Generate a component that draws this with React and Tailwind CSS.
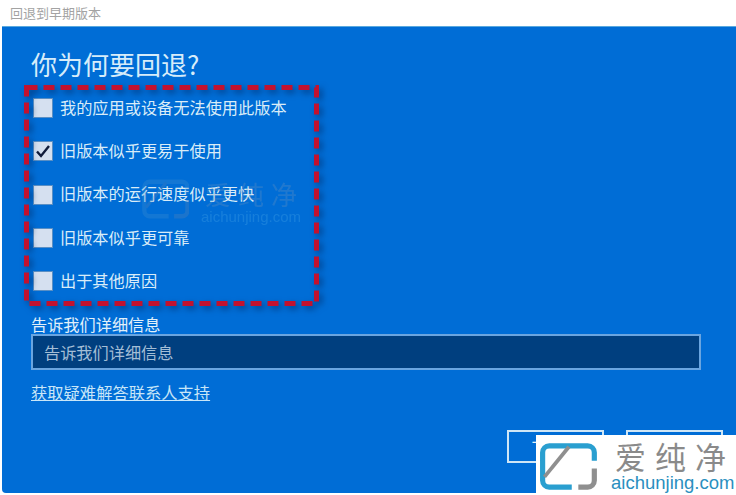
import React from 'react';

const font = { fontFamily: '"Noto Sans CJK SC", "Liberation Sans", sans-serif' };
const latin = { fontFamily: '"Liberation Sans", sans-serif' };

const options = [
  { label: '我的应用或设备无法使用此版本', checked: false },
  { label: '旧版本似乎更易于使用', checked: true },
  { label: '旧版本的运行速度似乎更快', checked: false },
  { label: '旧版本似乎更可靠', checked: false },
  { label: '出于其他原因', checked: false },
];

const LogoMark = ({ className, blue = '#2a9fd0', gray = '#8f8f8f' }) => (
  <svg className={className} viewBox="0 0 60 50" fill="none">
    <path d="M58 19V10a7 7 0 0 0-7-7H10a7 7 0 0 0-7 7v30a7 7 0 0 0 7 7h24" stroke={blue} strokeWidth="5.5" />
    <path d="M5 36L31 4" stroke={gray} strokeWidth="4" />
    <path d="M58 27v13a7 7 0 0 1-7 7H41" stroke={gray} strokeWidth="5.5" />
  </svg>
);

const App = () => {
  return (
    <div className="relative h-[495px] w-[736px] overflow-hidden bg-white" style={font}>
      <div className="flex h-[26px] items-center pl-[10px] text-[13px] text-[#a3a3a3]">回退到早期版本</div>
      <div className="ml-[2px] flex h-[467px] flex-col rounded-bl-[4px] border-t border-[#5aa9de] bg-[#006dd6] pl-[2px] pt-[20px]">
        <h1 className="ml-[27px] text-[26px] leading-[34px] text-[#d6ecfa]">你为何要回退?</h1>

        <div className="relative ml-[20px] mt-[4px] h-[221px] w-[295px] pl-[9px] pt-[13px]">
          {/* red annotation drawn round the options */}
          <svg className="absolute left-0 top-0 h-[221px] w-[295px] drop-shadow-[3px_3px_3px_rgba(0,30,80,0.55)]" viewBox="0 0 295 221" fill="none">
            <rect x="2.5" y="2.5" width="290" height="216" stroke="#c2122f" strokeWidth="5" strokeDasharray="11 6" />
          </svg>
          <div className="flex flex-col gap-[23.3px]">
            {options.map((opt) => (
              <div key={opt.label} className="flex h-[20px] items-center gap-[7px]">
                <div className="flex h-[20px] w-[20px] items-center justify-center border border-[#5a8fc4] bg-[#d5e0f0]">
                  {opt.checked && (
                    <svg className="h-[16px] w-[16px]" viewBox="0 0 16 16" fill="none">
                      <path d="M2 8.5l4 4.5L14 3" stroke="#101c3c" strokeWidth="2.4" />
                    </svg>
                  )}
                </div>
                <span className="-mt-[2px] text-[16.2px] text-[#d9ecf8]">{opt.label}</span>
              </div>
            ))}
          </div>
        </div>

        <label className="ml-[27px] mt-[8px] text-[16.2px] leading-[20px] text-[#e2f0fa]">告诉我们详细信息</label>
        <div className="ml-[27px] flex h-[36px] w-[670px] items-center border-2 border-[#6aa5e0] bg-[#003f7f] pl-[11px] text-[16.2px] text-[#a4bed6]">
          <span>告诉我们详细信息</span>
        </div>
        <a className="ml-[27px] mt-[12px] w-fit text-[16.3px] leading-[20px] text-[#c8e6f8] underline">获取疑难解答联系人支持</a>

        <div className="ml-[503px] mt-[28px] flex gap-[22px]">
          <button className="h-[33px] w-[97px] border-2 border-[#cfe6f6] text-[16px] text-[#e2f0fa]">下一步</button>
          <button className="h-[33px] w-[97px] border-2 border-[#cfe6f6] text-[16px] text-[#e2f0fa]">取消</button>
        </div>
      </div>

      {/* faint watermark over the options */}
      <div className="pointer-events-none absolute left-[142px] top-[178px] flex items-start gap-[12px] opacity-30">
        <LogoMark className="h-[42px] w-[47px] shrink-0" blue="#3f8fd0" gray="#5a86b8" />
        <div className="flex flex-col">
          <span className="ml-[4px] whitespace-nowrap text-[26px] leading-[32px] tracking-[7px] text-[#6a94c0]">爱纯净</span>
          <span className="whitespace-nowrap text-[15px] leading-[14px] text-[#4aa8e8]" style={latin}>aichunjing.com</span>
        </div>
      </div>

      {/* logo stamp in the corner */}
      <div className="absolute bottom-0 right-0 flex h-[60px] w-[200px] items-start gap-[14px] bg-white pl-[3px] pt-[8px]">
        <LogoMark className="h-[47px] w-[58px] shrink-0" />
        <div className="flex flex-col">
          <span className="-mt-[5px] ml-[4px] w-[116px] text-[31px] leading-[36px] tracking-[9px] whitespace-nowrap overflow-visible text-[#8a8a8a]">爱纯净</span>
          <span className="mt-[1px] whitespace-nowrap text-[18.5px] leading-[16px] text-[#2a8fc0]" style={latin}>aichunjing.com</span>
        </div>
      </div>
    </div>
  );
};

export default App;
